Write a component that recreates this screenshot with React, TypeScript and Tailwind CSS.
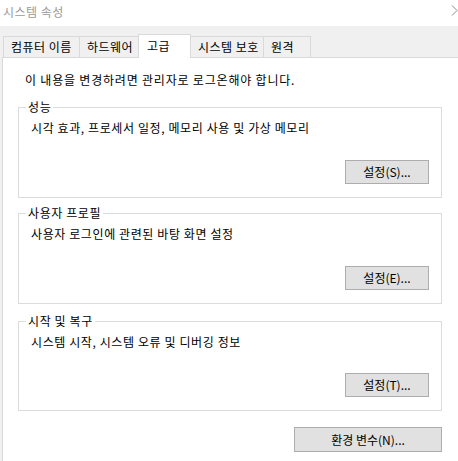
import React from "react";

const tabs = [
  { label: "컴퓨터 이름", w: "w-[77px]" },
  { label: "하드웨어", w: "w-[60px]" },
  { label: "고급", w: "w-[53px]", active: true },
  { label: "시스템 보호", w: "w-[74px]" },
  { label: "원격", w: "w-[48px]" },
];

function WinButton({ children, className = "" }: { children: React.ReactNode; className?: string }) {
  return (
    <button
      className={`h-[24px] border border-[#adadad] bg-[#e1e1e1] text-[12px] leading-none text-black flex items-center justify-center ${className}`}
    >
      {children}
    </button>
  );
}

function Group({ title, text, button, height }: { title: string; text: string; button: string; height: string }) {
  return (
    <div className={`relative ml-[15px] w-[424px] ${height} border border-[#dcdcdc] flex flex-col`}>
      <span className="absolute -top-[9px] left-[7px] bg-white px-[2px] text-[12px] leading-[16px] tracking-[0.6px]">{title}</span>
      <p className="pl-[12px] pt-[12px] text-[12px] leading-[16px] tracking-[0.6px]">{text}</p>
      <WinButton className="mt-auto self-end mb-[13px] mr-[12px] w-[84px]">{button}</WinButton>
    </div>
  );
}

export default function App() {
  return (
    <div className="w-[458px] h-[461px] overflow-hidden bg-[#f0f0f0] flex flex-col font-['Noto_Sans_CJK_KR',sans-serif] text-black">
      {/* title bar */}
      <div className="relative h-[26px] bg-white flex items-center pl-[3px] shrink-0">
        <span className="text-[12px] text-[#9b9b9b] -mt-[3px] tracking-[0.5px]">시스템 속성</span>
        <svg className="absolute right-0 top-[5px]" width="7" height="11" viewBox="0 0 7 11">
          <path d="M1 0.5 L6 5.5 L1 10.5" fill="none" stroke="#8a8a8a" strokeWidth="1" />
        </svg>
      </div>

      {/* tabs */}
      <div className="h-[31px] flex items-end pl-[3px] shrink-0">
        {tabs.map((t, i) =>
          t.active ? (
            <div
              key={t.label}
              className={`${t.w} ${i > 0 ? "-ml-px" : ""} relative z-10 -mb-px h-[24px] bg-white border border-b-0 border-[#d9d9d9] flex items-center pl-[8px] pb-[2px] text-[12px] tracking-[0.5px]`}
            >
              {t.label}
            </div>
          ) : (
            <div
              key={t.label}
              className={`${t.w} ${i > 0 ? "-ml-px" : ""} h-[21px] border border-b-0 border-[#d9d9d9] flex items-center pl-[7px] text-[12px] tracking-[0.5px]`}
            >
              {t.label}
            </div>
          )
        )}
      </div>

      {/* panel */}
      <div className="flex-1 ml-[2px] bg-white border-l border-t border-[#d9d9d9] flex flex-col">
        <p className="mt-[14px] pl-[22px] text-[12px] leading-[16px] tracking-[0.8px]">이 내용을 변경하려면 관리자로 로그온해야 합니다.</p>
        <div className="mt-[19px]">
          <Group title="성능" text="시각 효과, 프로세서 일정, 메모리 사용 및 가상 메모리" button="설정(S)..." height="h-[91px]" />
        </div>
        <div className="mt-[15px]">
          <Group title="사용자 프로필" text="사용자 로그인에 관련된 바탕 화면 설정" button="설정(E)..." height="h-[91px]" />
        </div>
        <div className="mt-[17px]">
          <Group title="시작 및 복구" text="시스템 시작, 시스템 오류 및 디버깅 정보" button="설정(T)..." height="h-[90px]" />
        </div>
        <div className="mt-[16px] w-[439px] flex justify-end">
          <WinButton className="w-[148px] h-[25px]">환경 변수(N)...</WinButton>
        </div>
      </div>
    </div>
  );
}
